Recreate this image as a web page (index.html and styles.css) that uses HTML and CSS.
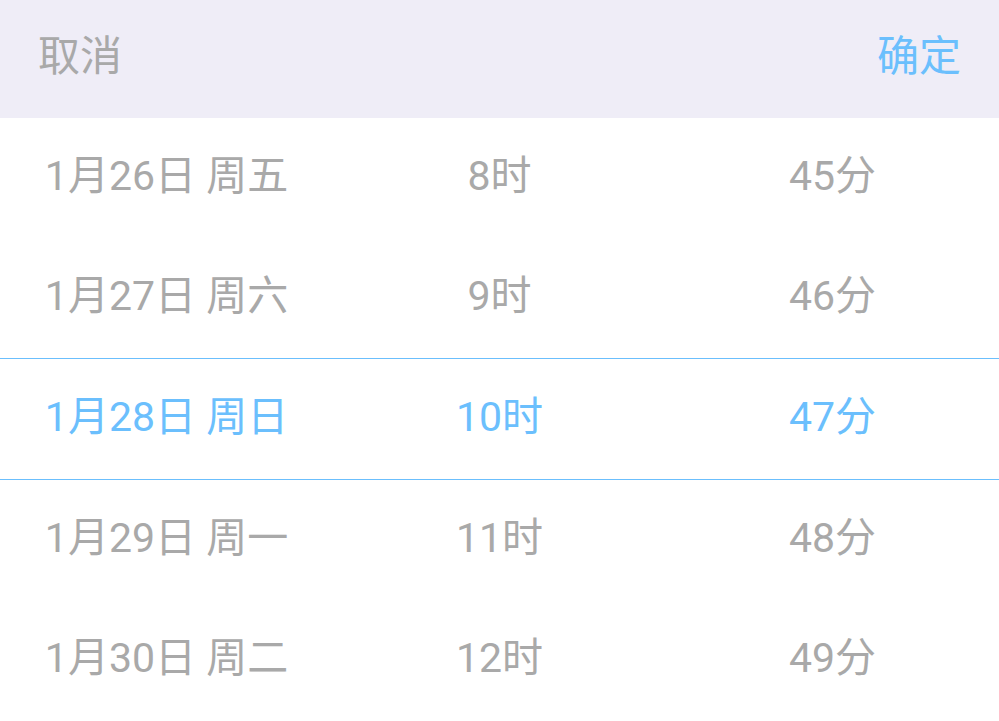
FILE: index.html
```html
<!DOCTYPE html>
<html lang="zh">
<head>
<meta charset="utf-8">
<link rel="stylesheet" href="styles.css">
</head>
<body>
<div class="picker">
  <div class="toolbar">
    <span class="btn cancel">取消</span>
    <span class="btn ok">确定</span>
  </div>
  <div class="rows">
    <div class="row"><span>1月26日 周五</span><span>8时</span><span>45分</span></div>
    <div class="row"><span>1月27日 周六</span><span>9时</span><span>46分</span></div>
    <div class="row selected"><span>1月28日 周日</span><span>10时</span><span>47分</span></div>
    <div class="row"><span>1月29日 周一</span><span>11时</span><span>48分</span></div>
    <div class="row"><span>1月30日 周二</span><span>12时</span><span>49分</span></div>
  </div>
</div>
</body>
</html>
```
FILE: styles.css
```css
html, body {
  margin: 0;
  padding: 0;
  background: #ffffff;
}
body {
  font-family: Roboto, "Noto Sans CJK SC", sans-serif;
  font-weight: 400;
  width: 999px;
  height: 721px;
  overflow: hidden;
}
.toolbar {
  height: 118px;
  background: #efedf7;
  display: flex;
  justify-content: space-between;
  align-items: center;
  padding: 0 38px 4px 38px;
  box-sizing: border-box;
}
.btn {
  font-size: 42px;
  line-height: 1;
}
.cancel { color: #a9a9a9; }
.ok { color: #6bbffd; }
.row {
  height: 120px;
  display: grid;
  grid-template-columns: 333px 333px 333px;
  align-items: center;
  justify-items: center;
  padding-bottom: 4px;
  box-sizing: border-box;
  color: #a9a9a9;
  font-size: 41px;
  line-height: 1;
}
.row.selected {
  height: 122px;
  color: #6bbffd;
  border-top: 1px solid #6bbffd;
  border-bottom: 1px solid #6bbffd;
}
```
